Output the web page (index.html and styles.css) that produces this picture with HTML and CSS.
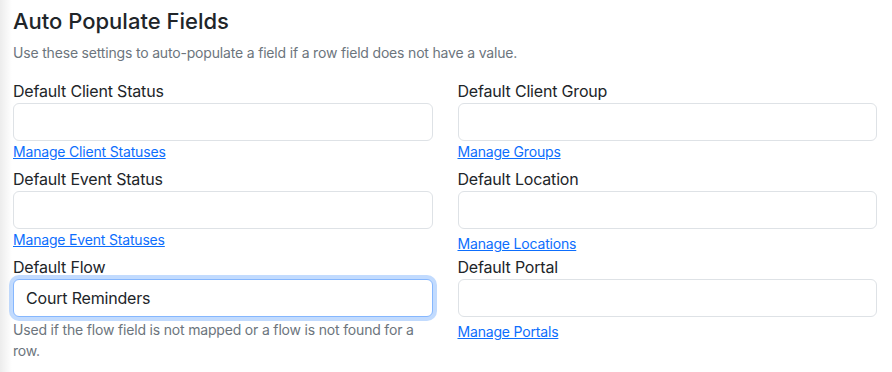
FILE: index.html
```html
<!DOCTYPE html>
<html lang="en">
<head>
<meta charset="utf-8">
<title>Auto Populate Fields</title>
<link rel="stylesheet" href="styles.css">
</head>
<body>
<main class="page">
  <h2 class="title">Auto Populate Fields</h2>
  <p class="intro">Use these settings to auto-populate a field if a row field does not have a value.</p>
  <div class="fields">
    <div class="field">
      <label class="label" for="client-status">Default Client Status</label>
      <input class="input" id="client-status" type="text">
      <div class="link-row"><a href="#" class="link">Manage Client Statuses</a></div>
    </div>
    <div class="field">
      <label class="label" for="client-group">Default Client Group</label>
      <input class="input" id="client-group" type="text">
      <div class="link-row"><a href="#" class="link">Manage Groups</a></div>
    </div>
    <div class="field">
      <label class="label" for="event-status">Default Event Status</label>
      <input class="input" id="event-status" type="text">
      <div class="link-row"><a href="#" class="link">Manage Event Statuses</a></div>
    </div>
    <div class="field">
      <label class="label" for="location">Default Location</label>
      <input class="input" id="location" type="text">
      <div class="link-row link-row-spaced"><a href="#" class="link">Manage Locations</a></div>
    </div>
    <div class="field">
      <label class="label" for="flow">Default Flow</label>
      <input class="input input-focused" id="flow" type="text" value="Court Reminders">
      <div class="help">Used if the flow field is not mapped or a flow is not found for a row.</div>
    </div>
    <div class="field">
      <label class="label" for="portal">Default Portal</label>
      <input class="input" id="portal" type="text">
      <div class="link-row link-row-spaced"><a href="#" class="link">Manage Portals</a></div>
    </div>
  </div>
</main>
</body>
</html>
```

FILE: styles.css
```css
html, body {
  margin: 0;
  height: 100%;
}

body {
  font-family: "Inter", "Liberation Sans", sans-serif;
  letter-spacing: -0.18px;
  color: #212529;
  background-color: #fff;
  background-image: linear-gradient(90deg, rgba(0, 0, 0, 0.075) 0, rgba(0, 0, 0, 0) 12px);
  background-repeat: no-repeat;
}

.page {
  padding: 8px 15px 0 13px;
}

.title {
  margin: 0 0 8px;
  font-size: 22px;
  font-weight: 500;
  line-height: 1.2;
  letter-spacing: 0;
}

.intro {
  margin: 0 0 16px;
  font-size: 14px;
  line-height: 21px;
  color: #6c757d;
}

.fields {
  display: grid;
  grid-template-columns: 1fr 1fr;
  column-gap: 25px;
  row-gap: 1px;
}

.field {
  display: flex;
  flex-direction: column;
  min-width: 0;
}

.label {
  display: block;
  font-size: 16px;
  line-height: 24px;
}

.input {
  box-sizing: border-box;
  display: block;
  width: 100%;
  height: 38px;
  margin: 0;
  padding: 6px 12px;
  font-family: inherit;
  font-size: 16px;
  line-height: 24px;
  letter-spacing: -0.18px;
  color: #212529;
  background: #fff;
  border: 1px solid #dee2e6;
  border-radius: 6px;
  outline: none;
}

.input-focused {
  border-color: #86b7fe;
  box-shadow: 0 0 0 4px rgba(13, 110, 253, 0.25);
}

.link-row {
  margin-bottom: 4px;
  font-size: 14px;
  line-height: 21px;
}

.link-row-spaced {
  margin-top: 4px;
  margin-bottom: 0;
}

.link {
  color: #0d6efd;
  text-decoration: underline;
}

.help {
  margin-top: 2px;
  font-size: 14px;
  line-height: 21px;
  color: #6c757d;
}
```
